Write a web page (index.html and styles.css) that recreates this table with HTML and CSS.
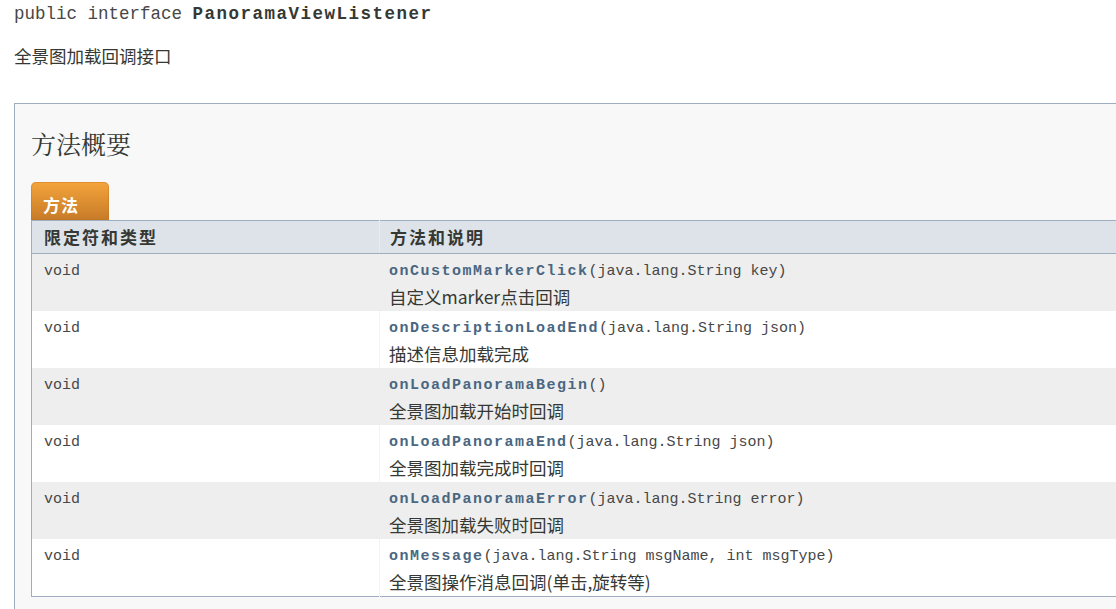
FILE: index.html
```html
<!DOCTYPE html>
<html lang="zh-CN">
<head>
<meta charset="utf-8">
<title>PanoramaViewListener</title>
<link rel="stylesheet" href="styles.css">
</head>
<body>
<div class="page">
  <pre class="sig">public interface <span class="type-name">PanoramaViewListener</span></pre>
  <div class="block">全景图加载回调接口</div>

  <div class="summary">
    <h3 class="summary-title">方法概要</h3>
    <div class="tab"><span>方法</span></div>
    <table class="member-table">
      <thead>
        <tr>
          <th class="col-first">限定符和类型</th>
          <th class="col-last">方法和说明</th>
        </tr>
      </thead>
      <tbody>
        <tr class="alt">
          <td class="col-first"><code>void</code></td>
          <td class="col-last"><div class="code"><a class="member">onCustomMarkerClick</a>(java.lang.String&nbsp;key)</div><div class="desc">自定义marker点击回调</div></td>
        </tr>
        <tr class="row">
          <td class="col-first"><code>void</code></td>
          <td class="col-last"><div class="code"><a class="member">onDescriptionLoadEnd</a>(java.lang.String&nbsp;json)</div><div class="desc">描述信息加载完成</div></td>
        </tr>
        <tr class="alt">
          <td class="col-first"><code>void</code></td>
          <td class="col-last"><div class="code"><a class="member">onLoadPanoramaBegin</a>()</div><div class="desc">全景图加载开始时回调</div></td>
        </tr>
        <tr class="row">
          <td class="col-first"><code>void</code></td>
          <td class="col-last"><div class="code"><a class="member">onLoadPanoramaEnd</a>(java.lang.String&nbsp;json)</div><div class="desc">全景图加载完成时回调</div></td>
        </tr>
        <tr class="alt">
          <td class="col-first"><code>void</code></td>
          <td class="col-last"><div class="code"><a class="member">onLoadPanoramaError</a>(java.lang.String&nbsp;error)</div><div class="desc">全景图加载失败时回调</div></td>
        </tr>
        <tr class="row">
          <td class="col-first"><code>void</code></td>
          <td class="col-last"><div class="code"><a class="member">onMessage</a>(java.lang.String&nbsp;msgName, int&nbsp;msgType)</div><div class="desc">全景图操作消息回调(单击,旋转等)</div></td>
        </tr>
      </tbody>
    </table>
  </div>
</div>
</body>
</html>
```
FILE: styles.css
```css
html, body {
  margin: 0;
  padding: 0;
  background: #ffffff;
  overflow: hidden;
}

.page {
  padding-left: 14px;
  color: #353833;
}

.sig {
  margin: 0;
  padding-top: 3px;
  font-family: "Liberation Mono", monospace;
  font-size: 17.5px;
  line-height: 22px;
  color: #474747;
}

.type-name {
  font-weight: bold;
  letter-spacing: 1.5px;
  color: #353833;
}

.block {
  margin-top: 19px;
  font-family: "Noto Sans CJK SC", sans-serif;
  font-size: 17.5px;
  line-height: 24px;
  color: #353833;
}

.summary {
  margin-top: 35px;
  width: 1130px;
  height: 520px;
  box-sizing: border-box;
  border-top: 1px solid #9eadc0;
  border-left: 1px solid #9eadc0;
  background: #f8f8f8;
  padding: 24px 0 0 16px;
}

.summary-title {
  margin: 0;
  font-family: "Noto Serif CJK SC", "Noto Sans CJK SC", serif;
  font-weight: normal;
  font-size: 25px;
  line-height: 30px;
  color: #353833;
}

.tab {
  margin-top: 24px;
  width: 78px;
  height: 38px;
  box-sizing: border-box;
  padding: 12px 0 0 12px;
  border-radius: 5px 5px 0 0;
  background: linear-gradient(#f4a43c, #c77b27);
  box-shadow: inset 0 0 0 1px rgba(190, 110, 30, 0.35);
}

.tab span {
  display: block;
  font-family: "Noto Sans CJK SC", sans-serif;
  font-weight: bold;
  font-size: 17px;
  line-height: 22px;
  letter-spacing: 1px;
  color: #ffffff;
}

.member-table {
  border-collapse: collapse;
  table-layout: fixed;
  width: 1100px;
  border: 1px solid #9eadc0;
}

.member-table th {
  height: 32px;
  padding: 0 0 0 12px;
  text-align: left;
  font-family: "Noto Sans CJK SC", sans-serif;
  font-weight: bold;
  font-size: 17px;
  line-height: 32px;
  letter-spacing: 2px;
  color: #353833;
  background: #dee3e9;
  border-bottom: 1px solid #9eadc0;
}

.member-table th.col-first {
  width: 335px;
}

.member-table th.col-last {
  padding-left: 10px;
  border-left: 1px solid #e8ecf0;
}

.member-table td {
  height: 57px;
  box-sizing: border-box;
  padding: 7px 0 0 12px;
  vertical-align: top;
}

.member-table td.col-last {
  padding-left: 9px;
}

.member-table tr.alt td {
  background: #eeeeee;
}

.member-table tr.row td {
  background: #ffffff;
}

.member-table tr.row td.col-last {
  border-left: 1px solid #f3f3f3;
}

.member-table tr.alt td.col-last {
  border-left: 1px solid #eeeeee;
}

.member-table code,
.code {
  display: block;
  font-family: "Liberation Mono", monospace;
  font-size: 15px;
  line-height: 22px;
  color: #474747;
}

.member {
  font-weight: bold;
  letter-spacing: 1.5px;
  color: #4a6782;
  text-decoration: none;
}

.desc {
  font-family: "Noto Sans CJK SC", sans-serif;
  font-size: 17.5px;
  line-height: 28px;
  color: #353833;
}
```
